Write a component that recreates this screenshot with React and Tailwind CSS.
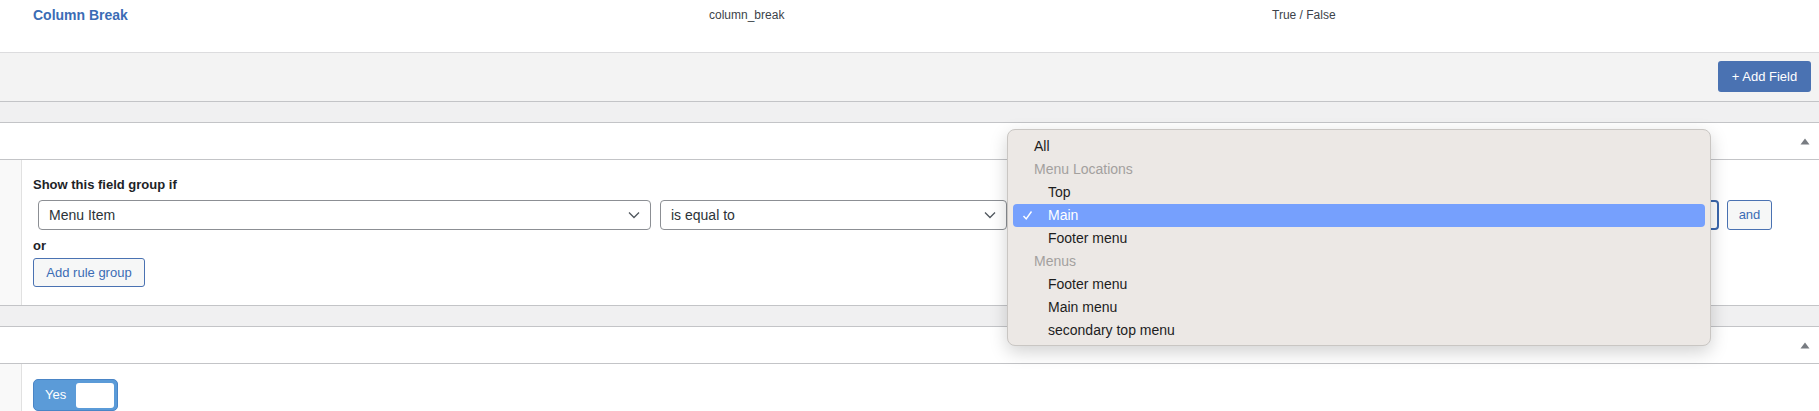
import React from "react";

function Tri() {
  return (
    <svg width="10" height="7" viewBox="0 0 10 7" className="block">
      <path d="M5 0.5 L9.5 6.5 L0.5 6.5 Z" fill="#787c82" />
    </svg>
  );
}

function Chevron() {
  return (
    <svg width="12" height="8" viewBox="0 0 12 8" className="block">
      <path d="M1 1.5 L6 6.5 L11 1.5" fill="none" stroke="#50575e" strokeWidth="1.3" />
    </svg>
  );
}

function Select({ label, className }) {
  return (
    <div
      className={
        "h-[30px] flex items-center justify-between pl-[10px] pr-[10px] rounded-[4px] border border-[#8c8f94] bg-white text-[14px] text-[#2c3338] " +
        className
      }
    >
      <span>{label}</span>
      <Chevron />
    </div>
  );
}

function PostboxHeader() {
  return (
    <div className="h-[37px] bg-white border-b border-[#c3c4c7] flex items-center justify-end pr-[9px]">
      <Tri />
    </div>
  );
}

function Band() {
  return <div className="h-[21px] bg-[#f0f0f1] border-b border-[#c3c4c7]" />;
}

const options = [
  { t: "All", kind: "top" },
  { t: "Menu Locations", kind: "group" },
  { t: "Top", kind: "opt" },
  { t: "Main", kind: "opt", sel: true },
  { t: "Footer menu", kind: "opt" },
  { t: "Menus", kind: "group" },
  { t: "Footer menu", kind: "opt" },
  { t: "Main menu", kind: "opt" },
  { t: "secondary top menu", kind: "opt" },
];

export default function App() {
  return (
    <div
      className="relative w-[1819px] h-[411px] overflow-hidden bg-white"
      style={{ fontFamily: '"Liberation Sans", Arial, sans-serif' }}
    >
      {/* field row */}
      <div className="h-[53px] border-b border-[#dcdcde] bg-white flex items-start pt-[5px] pl-[33px]">
        <div className="w-[676px] text-[14px] font-bold text-[#3b6cb5] leading-[20px]">Column Break</div>
        <div className="w-[563px] text-[12px] text-[#3c434a] leading-[20px]">column_break</div>
        <div className="text-[12px] text-[#3c434a] leading-[20px]">True / False</div>
      </div>

      {/* footer with add field */}
      <div className="h-[49px] bg-[#f3f3f3] border-b border-[#c3c4c7] flex items-start justify-end pt-[8px] pr-[8px]">
        <button className="w-[93px] h-[31px] rounded-[3px] bg-[#4a72b2] text-white text-[13px] flex items-center justify-center">
          + Add Field
        </button>
      </div>

      <Band />
      <PostboxHeader />

      {/* location rules */}
      <div className="h-[146px] flex border-b border-[#c3c4c7]">
        <div className="w-[22px] bg-[#f9f9f9] border-r border-[#e1e1e1]" />
        <div className="flex-1 pl-[11px] pt-[16px]">
          <div className="text-[13px] font-bold text-[#1d2327] leading-[18px]">Show this field group if</div>
          <div className="flex items-center mt-[6px]">
            <Select label="Menu Item" className="ml-[5px] w-[613px]" />
            <Select label="is equal to" className="ml-[9px] w-[347px]" />
            <div className="ml-[8px] w-[704px] h-[30px] rounded-[4px] border-2 border-[#3b67ad] bg-white" />
            <button className="ml-[8px] w-[45px] h-[30px] rounded-[3px] border border-[#4a72b2] bg-[#f6f7f7] text-[#3b6cb5] text-[13px]">
              and
            </button>
          </div>
          <div className="mt-[7px] text-[13px] font-bold text-[#1d2327] leading-[18px]">or</div>
          <button className="mt-[3px] w-[112px] h-[29px] rounded-[3px] border border-[#4a72b2] bg-[#f6f7f7] text-[#3b6cb5] text-[13px]">
            Add rule group
          </button>
        </div>
      </div>

      <Band />
      <PostboxHeader />

      <div className="flex h-[60px]">
        <div className="w-[22px] bg-[#f9f9f9] border-r border-[#e1e1e1]" />
        <div className="pl-[11px] pt-[15px]">
          <div className="w-[85px] h-[32px] rounded-[5px] bg-[#5b9bd8] border border-[#4a85c6] flex items-center pl-[11px] pr-[3px]">
            <span className="text-white text-[13px] w-[30px]">Yes</span>
            <div className="ml-auto w-[38px] h-[25px] rounded-[3px] bg-white" />
          </div>
        </div>
      </div>

      {/* native dropdown overlay */}
      <div className="absolute left-[1007px] top-[129px] w-[704px] h-[217px] rounded-[8px] bg-[#ece8e5] border border-[#c9c6c3] shadow-[0_6px_18px_rgba(0,0,0,0.18)] px-[5px] pt-[5px]">
        {options.map((o, i) => (
          <div
            key={i}
            className={
              "relative h-[23px] flex items-center text-[14px] rounded-[4px] " +
              (o.sel ? "bg-[#76a0fd] text-white " : "") +
              (o.kind === "group" ? "text-[#a3a09e] pl-[21px] " : o.kind === "top" ? "text-[#1d1d1d] pl-[21px] " : o.sel ? "pl-[35px] " : "text-[#1d1d1d] pl-[35px] ")
            }
          >
            {o.sel && (
              <svg className="absolute left-[9px] top-[6px]" width="11" height="11" viewBox="0 0 11 11">
                <path d="M1.5 6 L4.2 9 L9.5 1.5" fill="none" stroke="white" strokeWidth="1.4" />
              </svg>
            )}
            {o.t}
          </div>
        ))}
      </div>
    </div>
  );
}
